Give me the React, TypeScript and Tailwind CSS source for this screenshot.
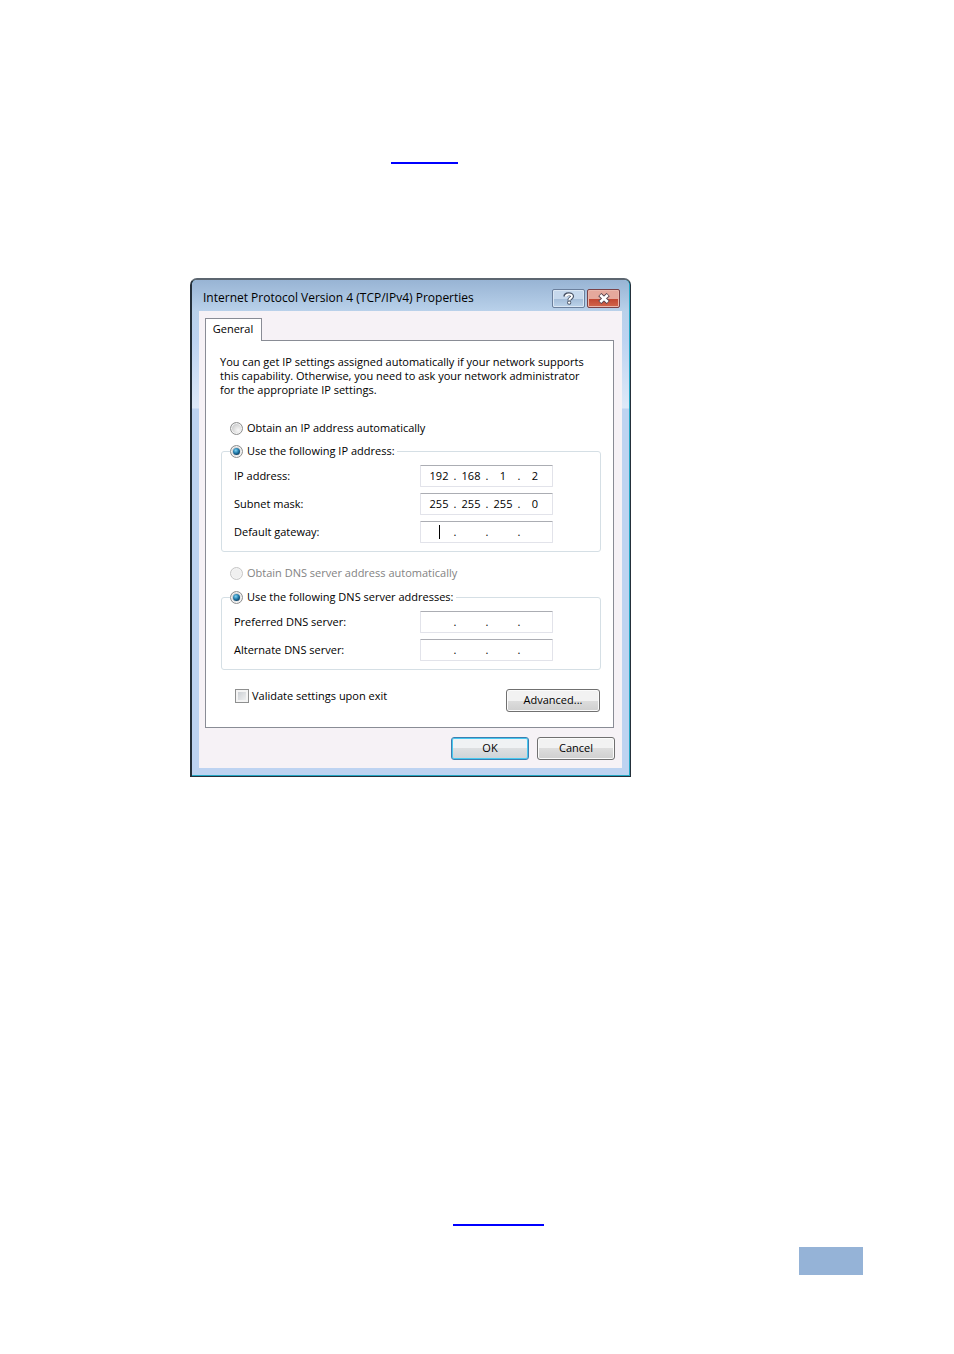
import { useState } from 'react';

const radioStyle =
  "grid h-[13px] w-[13px] shrink-0 appearance-none place-items-center rounded-full border border-[#8e8f8f] bg-[radial-gradient(circle_at_65%_65%,#f8f8f8,#dcdcdc_45%,#b4b8bc)] shadow-[inset_0_0_0_1px_#f4f4f4] checked:before:h-[7px] checked:before:w-[7px] checked:before:rounded-full checked:before:bg-[radial-gradient(circle_at_40%_35%,#7fd4f4,#1f78a8_45%,#0b2c48_85%)] checked:before:content-[''] disabled:border-[#c6c6c6] disabled:bg-none disabled:bg-[#f0f0f0]";

const buttonStyle =
  'h-[23px] rounded-[3px] border border-[#707070] bg-linear-to-b from-[#f2f2f2] from-50% via-[#dddddd] via-50% to-[#cfcfcf] text-center shadow-[inset_0_0_0_1px_#fbfbfb]';

type RadioProps = {
  name: string;
  label: string;
  checked?: boolean;
  disabled?: boolean;
};

const RadioOption: React.FC<RadioProps> = ({ name, label, checked, disabled }) => {
  return (
    <label className={`flex h-4 items-center gap-1 leading-4 ${disabled ? 'text-[#838383]' : ''}`}>
      <input type="radio" name={name} defaultChecked={checked} disabled={disabled} className={radioStyle} />
      {label}
    </label>
  );
};

type AddressProps = {
  id: string;
  label: string;
  value?: string[];
  caret?: boolean;
};

const AddressRow: React.FC<AddressProps> = ({ id, label, value = ['', '', '', ''], caret }) => {
  const [octets, setOctets] = useState(value);

  const update = (index: number, next: string) => {
    setOctets(octets.map((octet, i) => (i === index ? next : octet)));
  };

  return (
    <div className="flex items-center">
      <label htmlFor={`${id}-0`} className="w-[186px] leading-4">
        {label}
      </label>
      <div className="relative flex h-[22px] w-[133px] items-center rounded-[1px] border border-[#e2e3ea] border-t-[#abadb3] bg-white pl-1 leading-4">
        {octets.map((octet, i) => (
          <div key={i} className="flex">
            <input
              id={`${id}-${i}`}
              aria-label={`${label} ${i + 1}`}
              value={octet}
              maxLength={3}
              onChange={(e) => update(i, e.target.value)}
              className="h-4 w-7 bg-transparent text-center outline-none"
            />
            {i < 3 && <span className="w-1 text-center">.</span>}
          </div>
        ))}
        {caret && <span className="absolute top-[3px] left-[18px] h-[14px] w-px bg-black" />}
      </div>
    </div>
  );
};

const TitleBar: React.FC = () => {
  return (
    <div className="flex h-[31px] items-start justify-between pr-[2px] pl-1">
      <h1 className="pt-[10px] text-[12px] leading-4">Internet Protocol Version 4 (TCP/IPv4) Properties</h1>
      <div className="flex gap-[2px] pt-[9px]">
        <button
          type="button"
          aria-label="Help"
          className="grid h-[19px] w-[33px] place-items-center rounded-[2px] border border-[#6b7f9c] bg-linear-to-b from-[#c6d8ec] from-50% via-[#a3bcd8] via-50% to-[#bcd3ea] shadow-[inset_0_0_0_1px_#dbe7f4]"
        >
          <svg viewBox="0 0 12 13" className="h-[13px] w-3" fill="none">
            <path d="M2.2 4.6C2.2 1.4 9.2 1.2 9.2 4.3C9.2 6.2 6.2 6 6.2 8.6" stroke="#4b5568" strokeWidth="3.8" />
            <circle cx="6.2" cy="10.7" r="2.1" fill="#4b5568" />
            <path d="M2.8 4.8C2.8 2 9 1.8 9 4.3C9 6.2 6.2 6 6.2 8.2" stroke="#fff" strokeWidth="1.9" />
            <circle cx="6.2" cy="10.6" r="1.2" fill="#fff" />
          </svg>
        </button>
        <button
          type="button"
          aria-label="Close"
          className="grid h-[19px] w-[33px] place-items-center rounded-[2px] border border-[#7a4248] bg-linear-to-b from-[#e5a89c] from-50% via-[#c04430] via-50% to-[#d2664c] shadow-[inset_0_0_0_1px_#eab7ac]"
        >
          <svg viewBox="0 0 14 11" className="h-[11px] w-[14px]" fill="none">
            <path d="M2.8 1.6L11.2 9.4M11.2 1.6L2.8 9.4" stroke="#5a4650" strokeWidth="4.6" />
            <path d="M3.3 2L10.7 9M10.7 2L3.3 9" stroke="#fff" strokeWidth="2.6" />
          </svg>
        </button>
      </div>
    </div>
  );
};

const GeneralTab: React.FC = () => {
  return (
    <div>
      <div role="tablist" className="flex">
        <button
          type="button"
          role="tab"
          aria-selected="true"
          className="relative z-10 -mb-px h-[23px] w-[57px] border border-b-0 border-[#898c95] bg-white pr-px pb-[2px] text-center"
        >
          General
        </button>
      </div>
      <div role="tabpanel" className="border border-[#898c95] bg-white px-3 pt-[14px] pb-[15px]">
        <p className="pl-[2px] leading-[14px]">
          You can get IP settings assigned automatically if your network supports
          <br />
          this capability. Otherwise, you need to ask your network administrator
          <br />
          for the appropriate IP settings.
        </p>

        <div className="mt-[23px] pl-3">
          <RadioOption name="ip" label="Obtain an IP address automatically" />
        </div>
        <fieldset className="mt-[7px] ml-[3px] rounded-[3px] border border-[#d5dfe5] px-2 pb-2">
          <legend className="pr-[2px]">
            <RadioOption name="ip" label="Use the following IP address:" checked />
          </legend>
          <div className="flex flex-col gap-[6px] pt-[6px] pl-1">
            <AddressRow id="ip-address" label="IP address:" value={['192', '168', '1', '2']} />
            <AddressRow id="subnet-mask" label="Subnet mask:" value={['255', '255', '255', '0']} />
            <AddressRow id="gateway" label="Default gateway:" caret />
          </div>
        </fieldset>

        <div className="mt-[13px] pl-3">
          <RadioOption name="dns" label="Obtain DNS server address automatically" disabled />
        </div>
        <fieldset className="mt-2 ml-[3px] rounded-[3px] border border-[#d5dfe5] px-2 pb-2">
          <legend className="pr-[2px]">
            <RadioOption name="dns" label="Use the following DNS server addresses:" checked />
          </legend>
          <div className="flex flex-col gap-[6px] pt-[6px] pl-1">
            <AddressRow id="preferred-dns" label="Preferred DNS server:" />
            <AddressRow id="alternate-dns" label="Alternate DNS server:" />
          </div>
        </fieldset>

        <div className="mt-[19px] flex items-start justify-between pr-px pl-[17px]">
          <label className="flex items-center gap-[3px] leading-[14px]">
            <input
              type="checkbox"
              className="h-[14px] w-[14px] appearance-none border border-[#8e8f8f] bg-linear-to-br from-[#c4c9ce] to-[#f6f6f6] shadow-[inset_0_0_0_2px_#f4f4f4] checked:bg-[#4a8ab8]"
            />
            Validate settings upon exit
          </label>
          <button type="button" className={`${buttonStyle} w-[94px]`}>
            Advanced...
          </button>
        </div>
      </div>
    </div>
  );
};

const PropertiesDialog: React.FC = () => {
  return (
    <section
      aria-label="Internet Protocol Version 4 (TCP/IPv4) Properties"
      className="w-full max-w-[441px] rounded-t-[7px] border border-t-2 border-l-2 border-[#25303a] border-t-[#5c6670] bg-[#22a7c4] pr-px pb-px"
    >
      <div className="overflow-hidden rounded-t-[5px] bg-[linear-gradient(#b9d1ea_31px,#bdd3f1_60px,#dde9f8_128px,#bdd3f1_129px)] px-[7px] pb-[7px]">
        <div className="-mx-[7px] bg-linear-to-b from-[#98b4d4] to-[#b9d1ea] px-[7px]">
          <TitleBar />
        </div>
        <div className="bg-[#f6f2f6] pt-[7px] pr-[7px] pb-2 pl-[6px]">
          <div className="pr-px">
            <GeneralTab />
          </div>
          <div className="mt-[9px] flex justify-end gap-2">
            <button
              type="button"
              className="h-[23px] w-[78px] rounded-[3px] border border-[#3c7fb1] bg-linear-to-b from-[#f0f2f4] from-50% via-[#dddfe1] via-50% to-[#cdd3d8] text-center shadow-[inset_0_0_0_1px_#48c8f0]"
            >
              OK
            </button>
            <button type="button" className={`${buttonStyle} w-[78px]`}>
              Cancel
            </button>
          </div>
        </div>
      </div>
    </section>
  );
};

export default function App() {
  return (
    <div className="min-h-screen bg-white pt-[162px] font-['Open_Sans','Noto_Sans',sans-serif] text-[11px] text-black">
      <a href="#top" aria-label="Section" className="ml-[391px] block h-[2px] w-[67px] bg-[#0000ff]" />
      <main className="mt-[114px] pl-[190px]">
        <PropertiesDialog />
      </main>
      <footer className="mt-[447px]">
        <a href="#site" aria-label="Website" className="ml-[453px] block h-[2px] w-[91px] bg-[#0000ff]" />
        <div className="mt-[21px] flex justify-end pr-[91px]">
          <div className="h-7 w-16 bg-[#95b3d7]" />
        </div>
      </footer>
    </div>
  );
}
